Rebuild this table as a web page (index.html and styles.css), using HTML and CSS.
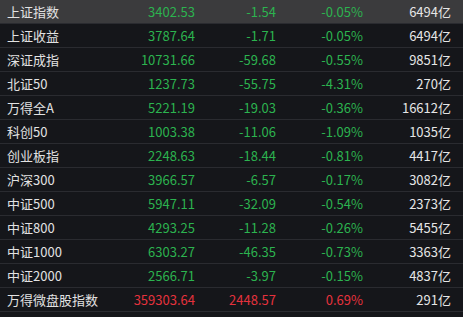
FILE: index.html
```html
<!DOCTYPE html>
<html>
<head>
    <meta charset="UTF-8">
    <title>指数</title>
    <link rel="stylesheet" href="styles.css">
</head>
<body>
<div class="board">
    <div class="row active"><span class="name">上证指数</span><span class="num down">3402.53</span><span class="num down">-1.54</span><span class="num down">-0.05%</span><span class="num amt">6494亿</span></div>
    <div class="row"><span class="name">上证收益</span><span class="num down">3787.64</span><span class="num down">-1.71</span><span class="num down">-0.05%</span><span class="num amt">6494亿</span></div>
    <div class="row"><span class="name">深证成指</span><span class="num down">10731.66</span><span class="num down">-59.68</span><span class="num down">-0.55%</span><span class="num amt">9851亿</span></div>
    <div class="row"><span class="name">北证50</span><span class="num down">1237.73</span><span class="num down">-55.75</span><span class="num down">-4.31%</span><span class="num amt">270亿</span></div>
    <div class="row"><span class="name">万得全A</span><span class="num down">5221.19</span><span class="num down">-19.03</span><span class="num down">-0.36%</span><span class="num amt">16612亿</span></div>
    <div class="row"><span class="name">科创50</span><span class="num down">1003.38</span><span class="num down">-11.06</span><span class="num down">-1.09%</span><span class="num amt">1035亿</span></div>
    <div class="row"><span class="name">创业板指</span><span class="num down">2248.63</span><span class="num down">-18.44</span><span class="num down">-0.81%</span><span class="num amt">4417亿</span></div>
    <div class="row"><span class="name">沪深300</span><span class="num down">3966.57</span><span class="num down">-6.57</span><span class="num down">-0.17%</span><span class="num amt">3082亿</span></div>
    <div class="row"><span class="name">中证500</span><span class="num down">5947.11</span><span class="num down">-32.09</span><span class="num down">-0.54%</span><span class="num amt">2373亿</span></div>
    <div class="row"><span class="name">中证800</span><span class="num down">4293.25</span><span class="num down">-11.28</span><span class="num down">-0.26%</span><span class="num amt">5455亿</span></div>
    <div class="row"><span class="name">中证1000</span><span class="num down">6303.27</span><span class="num down">-46.35</span><span class="num down">-0.73%</span><span class="num amt">3363亿</span></div>
    <div class="row"><span class="name">中证2000</span><span class="num down">2566.71</span><span class="num down">-3.97</span><span class="num down">-0.15%</span><span class="num amt">4837亿</span></div>
    <div class="row"><span class="name">万得微盘股指数</span><span class="num up">359303.64</span><span class="num up">2448.57</span><span class="num up">0.69%</span><span class="num amt">291亿</span></div>
</div>
</body>
</html>
```

FILE: styles.css
```css
html, body {
    margin: 0;
    padding: 0;
    background: #15161a;
}

.board {
    width: 463px;
    height: 317px;
    font-family: "Noto Sans CJK SC", "Microsoft YaHei", sans-serif;
    font-size: 13px;
    color: #e2e2e2;
}

.row {
    display: grid;
    grid-template-columns: 120px 75px 81px 87px 88px;
    align-items: center;
    height: 24px;
    border-bottom: 1px solid #2a2b30;
    box-sizing: border-box;
}

.row.active {
    background: #3b3b3d;
}

.name {
    padding-left: 7px;
}

.num {
    text-align: right;
}

.down {
    color: #2cb34f;
}

.up {
    color: #e5323d;
}

.amt {
    color: #e6e6e6;
}
```
